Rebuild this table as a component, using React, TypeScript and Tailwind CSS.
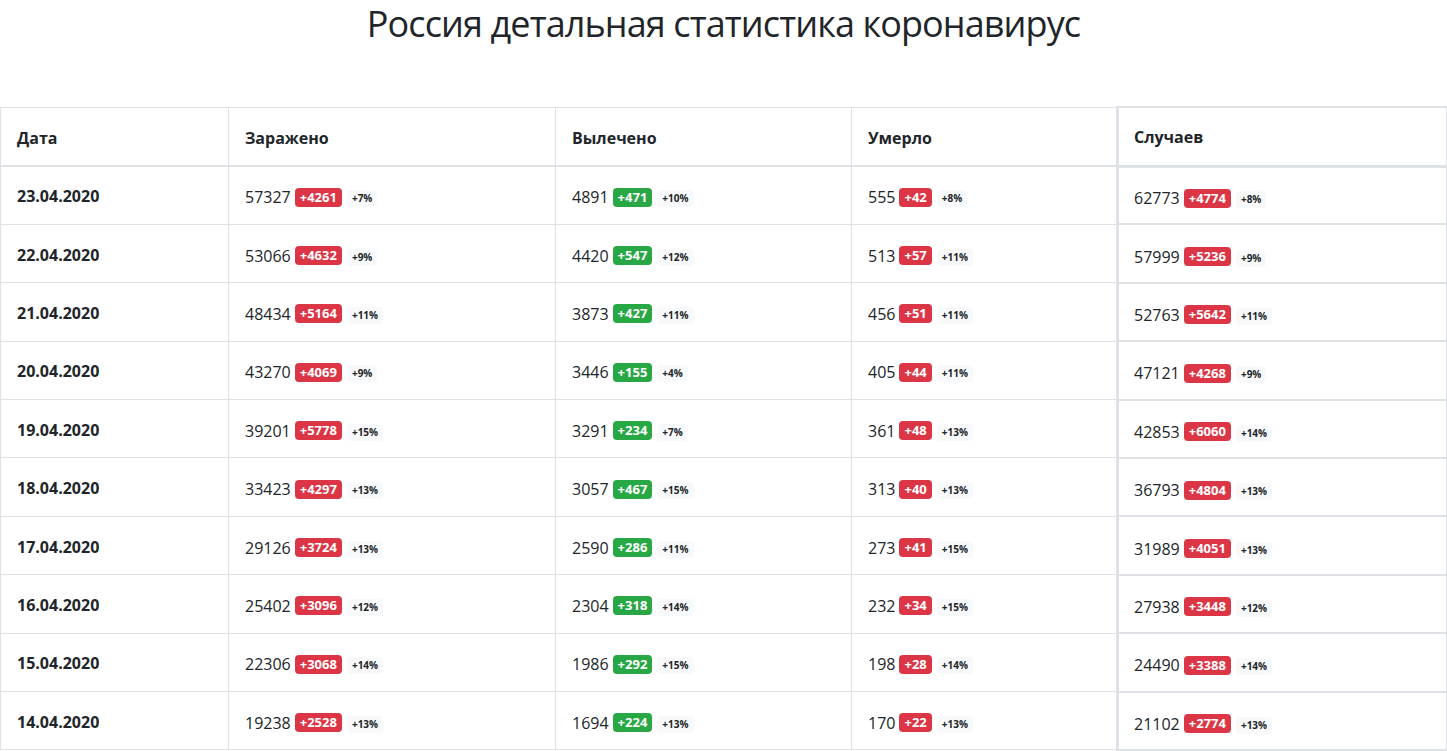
const rows: [string, number, number, string, number, number, string, number, number, string, number, number, string][] = [
  ["23.04.2020", 57327, 4261, "7", 4891, 471, "10", 555, 42, "8", 62773, 4774, "8"],
  ["22.04.2020", 53066, 4632, "9", 4420, 547, "12", 513, 57, "11", 57999, 5236, "9"],
  ["21.04.2020", 48434, 5164, "11", 3873, 427, "11", 456, 51, "11", 52763, 5642, "11"],
  ["20.04.2020", 43270, 4069, "9", 3446, 155, "4", 405, 44, "11", 47121, 4268, "9"],
  ["19.04.2020", 39201, 5778, "15", 3291, 234, "7", 361, 48, "13", 42853, 6060, "14"],
  ["18.04.2020", 33423, 4297, "13", 3057, 467, "15", 313, 40, "13", 36793, 4804, "13"],
  ["17.04.2020", 29126, 3724, "13", 2590, 286, "11", 273, 41, "15", 31989, 4051, "13"],
  ["16.04.2020", 25402, 3096, "12", 2304, 318, "14", 232, 34, "15", 27938, 3448, "12"],
  ["15.04.2020", 22306, 3068, "14", 1986, 292, "15", 198, 28, "14", 24490, 3388, "14"],
  ["14.04.2020", 19238, 2528, "13", 1694, 224, "13", 170, 22, "13", 21102, 2774, "13"],
];

function Cell({ value, delta, pct, green }: { value: number; delta: number; pct: string; green?: boolean }) {
  return (
    <span className="inline-flex items-center">
      <span>{value}</span>
      <span
        className={`ml-[4px] inline-block rounded-[4px] px-[5px] py-[3px] text-[13px] leading-[13px] font-bold text-white ${
          green ? "bg-[#28a745]" : "bg-[#dc3545]"
        }`}
      >
        +{delta}
      </span>
      <span className="ml-[5px] mt-[3px] inline-block rounded-[4px] bg-[#f8f9fa] px-[5px] py-[3px] text-[10px] leading-[11px] font-bold text-[#212529]">
        +{pct}%
      </span>
    </span>
  );
}

export default function App() {
  return (
    <div
      className="min-h-screen bg-white text-[#212529]"
      style={{ fontFamily: '"Open Sans", "Noto Sans", sans-serif' }}
    >
      <h1 className="h-[48px] text-center text-[36px] leading-[48px] font-normal tracking-[-0.9px]">
        Россия детальная статистика коронавирус
      </h1>

      <table className="mt-[58px] w-[1446px] table-fixed border-collapse text-[16px] leading-[24px]">
        <colgroup>
          <col className="w-[228px]" />
          <col className="w-[327px]" />
          <col className="w-[296px]" />
          <col className="w-[266px]" />
          <col className="w-[329px]" />
        </colgroup>
        <thead>
          <tr className="h-[59px]">
            <th className="border border-b-2 border-[#dee2e6] pl-[16px] pt-[4px] text-left font-bold">Дата</th>
            <th className="border border-b-2 border-[#dee2e6] pl-[16px] pt-[4px] text-left font-bold">Заражено</th>
            <th className="border border-b-2 border-[#dee2e6] pl-[16px] pt-[4px] text-left font-bold">Вылечено</th>
            <th className="border border-b-2 border-[#dee2e6] pl-[16px] pt-[4px] text-left font-bold">Умерло</th>
            <th className="border-2 border-l-[3px] border-b-[3px] border-[#dee2e6] pl-[15px] pt-[2px] text-left font-bold">Случаев</th>
          </tr>
        </thead>
        <tbody>
          {rows.map((r) => (
            <tr key={r[0]} className="h-[58.4px]">
              <td className="border border-[#dee2e6] pl-[16px] pt-[2px] font-bold">{r[0]}</td>
              <td className="border border-[#dee2e6] pl-[16px] pt-[4px]">
                <Cell value={r[1]} delta={r[2]} pct={r[3]} />
              </td>
              <td className="border border-[#dee2e6] pl-[16px] pt-[4px]">
                <Cell value={r[4]} delta={r[5]} pct={r[6]} green />
              </td>
              <td className="border border-[#dee2e6] pl-[16px] pt-[4px]">
                <Cell value={r[7]} delta={r[8]} pct={r[9]} />
              </td>
              <td className="border-2 border-l-[3px] border-[#dee2e6] pl-[15px] pt-[6px]">
                <Cell value={r[10]} delta={r[11]} pct={r[12]} />
              </td>
            </tr>
          ))}
        </tbody>
      </table>
    </div>
  );
}
